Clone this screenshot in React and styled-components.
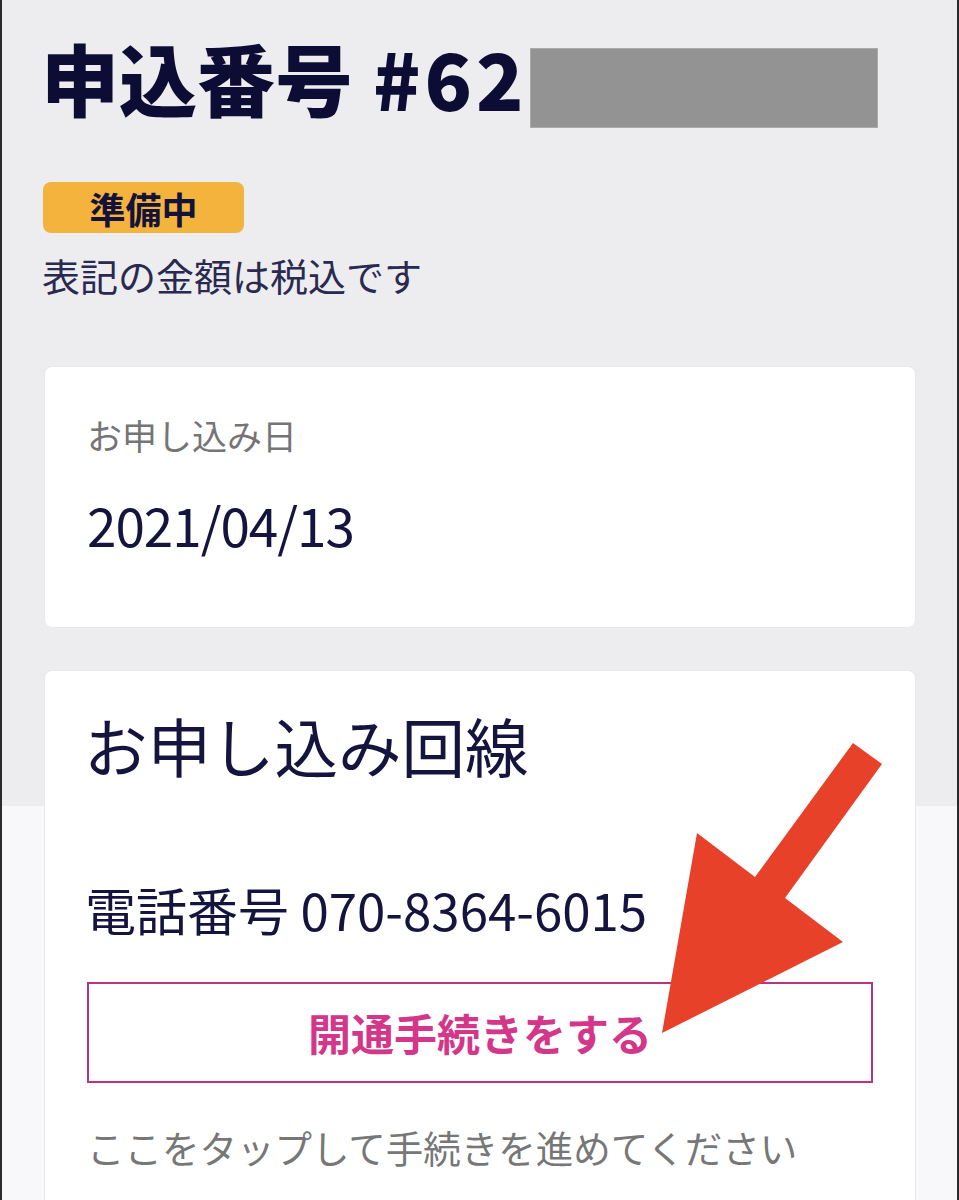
import React from 'react';
import styled, { createGlobalStyle } from 'styled-components';

const GlobalStyle = createGlobalStyle`
  html, body {
    margin: 0;
    padding: 0;
  }
  body {
    font-family: "Noto Sans CJK JP", "Noto Sans", sans-serif;
    color: #1c1b48;
  }
`;

const Page = styled.div`
  position: relative;
  box-sizing: border-box;
  width: 959px;
  min-height: 1200px;
  overflow: hidden;
  padding: 38px 41px 0 42px;
  border-left: 2px solid #2b2a2e;
  border-right: 2px solid #2b2a2e;
  background: linear-gradient(to bottom, #edecef 0, #edecef 806px, #f8f7fa 806px);
`;

const Title = styled.h1`
  display: flex;
  align-items: flex-start;
  margin: 0 0 0 -3px;
  font-size: 78px;
  line-height: 1;
  font-weight: 900;
  color: #0d0c35;
`;

const Number = styled.span`
  margin-left: 20px;
  letter-spacing: 4px;
`;

const Redacted = styled.span`
  display: inline-block;
  width: 348px;
  height: 80px;
  margin-top: 10px;
  margin-left: 2px;
  background: #939393;
  box-shadow: inset 0 0 0 1px #a9a9a9;
`;

const Badge = styled.div`
  display: inline-flex;
  align-items: center;
  justify-content: center;
  box-sizing: border-box;
  width: 201px;
  height: 51px;
  margin: 54px 0 0 -1px;
  border-radius: 8px;
  background: #f3b33d;
  color: #13123a;
  font-size: 36px;
  font-weight: 700;
  line-height: 1;
`;

const Note = styled.p`
  margin: 23px 0 0 -2px;
  font-size: 38px;
  line-height: 1;
  color: #2a2950;
`;

const Card = styled.section`
  box-sizing: border-box;
  margin-top: ${p => p.$gap}px;
  padding: ${p => p.$pad};
  background: #ffffff;
  border: 1px solid #e8e7f0;
  border-radius: 8px;
`;

const Label = styled.div`
  font-size: 35px;
  line-height: 1;
  color: #757575;
`;

const Value = styled.div`
  margin-top: ${p => p.$gap}px;
  margin-left: ${p => p.$shift || 0}px;
  font-size: ${p => p.$size}px;
  line-height: 1;
  color: #15143f;
  letter-spacing: ${p => p.$spacing || 0}px;
`;

const CardTitle = styled.h2`
  margin: 0 0 0 -3px;
  font-size: 63.5px;
  line-height: 1;
  font-weight: 400;
  color: #15143f;
`;

const ActionButton = styled.button`
  display: flex;
  align-items: center;
  justify-content: center;
  box-sizing: border-box;
  width: 100%;
  height: 101px;
  margin-top: 47px;
  padding: 0;
  background: #ffffff;
  border: 2px solid #b8347e;
  border-radius: 0;
  font-family: "Noto Sans CJK JP", sans-serif;
  font-size: 43px;
  font-weight: 700;
  line-height: 1;
  color: #d4368a;
  cursor: pointer;
`;

const Hint = styled.p`
  margin: 45px 0 0;
  font-size: 37.5px;
  line-height: 1;
  color: #777777;
  white-space: nowrap;
`;

const Arrow = styled.svg`
  position: absolute;
  left: -2px;
  top: 0;
  width: 959px;
  height: 1200px;
  pointer-events: none;
`;

export default function App() {
  return (
    <>
      <GlobalStyle />
      <Page>
        <Title>
          申込番号<Number>#62</Number>
          <Redacted />
        </Title>
        <Badge>準備中</Badge>
        <Note>表記の金額は税込です</Note>

        <Card $gap={72} $pad="50px 42px 76px 42px">
          <Label>お申し込み日</Label>
          <Value $gap={46} $size={53} $spacing={-1}>2021/04/13</Value>
        </Card>

        <Card $gap={42} $pad="42px 42px 60px 42px">
          <CardTitle>お申し込み回線</CardTitle>
          <Value $gap={107} $size={51} $shift={-2}>電話番号 070-8364-6015</Value>
          <ActionButton>開通手続きをする</ActionButton>
          <Hint>ここをタップして手続きを進めてください</Hint>
        </Card>

        <Arrow viewBox="0 0 959 1200">
          <polygon
            points="853,743 882,764 785,898 843,942 662,1033 697,833 755,877"
            fill="#e8412a"
          />
        </Arrow>
      </Page>
    </>
  );
}
